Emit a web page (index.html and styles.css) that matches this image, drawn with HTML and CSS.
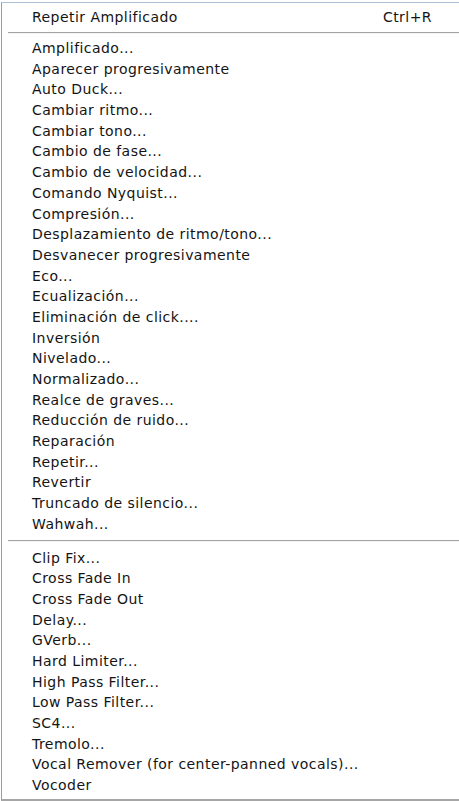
FILE: index.html
```html
<!DOCTYPE html>
<html lang="es">
<head>
<meta charset="utf-8">
<title>Menú Efectos</title>
<link rel="stylesheet" href="styles.css">
</head>
<body>
<div class="menu">
  <div class="item"><span class="label">Repetir Amplificado</span><span class="shortcut">Ctrl+R</span></div>
  <div class="sep"></div>
  <div class="item"><span class="label">Amplificado...</span></div>
  <div class="item"><span class="label">Aparecer progresivamente</span></div>
  <div class="item"><span class="label">Auto Duck...</span></div>
  <div class="item"><span class="label">Cambiar ritmo...</span></div>
  <div class="item"><span class="label">Cambiar tono...</span></div>
  <div class="item"><span class="label">Cambio de fase...</span></div>
  <div class="item"><span class="label">Cambio de velocidad...</span></div>
  <div class="item"><span class="label">Comando Nyquist...</span></div>
  <div class="item"><span class="label">Compresión...</span></div>
  <div class="item"><span class="label">Desplazamiento de ritmo/tono...</span></div>
  <div class="item"><span class="label">Desvanecer progresivamente</span></div>
  <div class="item"><span class="label">Eco...</span></div>
  <div class="item"><span class="label">Ecualización...</span></div>
  <div class="item"><span class="label">Eliminación de click....</span></div>
  <div class="item"><span class="label">Inversión</span></div>
  <div class="item"><span class="label">Nivelado...</span></div>
  <div class="item"><span class="label">Normalizado...</span></div>
  <div class="item"><span class="label">Realce de graves...</span></div>
  <div class="item"><span class="label">Reducción de ruido...</span></div>
  <div class="item"><span class="label">Reparación</span></div>
  <div class="item"><span class="label">Repetir...</span></div>
  <div class="item"><span class="label">Revertir</span></div>
  <div class="item"><span class="label">Truncado de silencio...</span></div>
  <div class="item"><span class="label">Wahwah...</span></div>
  <div class="sep sep-wide"></div>
  <div class="item"><span class="label">Clip Fix...</span></div>
  <div class="item"><span class="label">Cross Fade In</span></div>
  <div class="item"><span class="label">Cross Fade Out</span></div>
  <div class="item"><span class="label">Delay...</span></div>
  <div class="item"><span class="label">GVerb...</span></div>
  <div class="item"><span class="label">Hard Limiter...</span></div>
  <div class="item"><span class="label">High Pass Filter...</span></div>
  <div class="item"><span class="label">Low Pass Filter...</span></div>
  <div class="item"><span class="label">SC4...</span></div>
  <div class="item"><span class="label">Tremolo...</span></div>
  <div class="item"><span class="label">Vocal Remover (for center-panned vocals)...</span></div>
  <div class="item"><span class="label">Vocoder</span></div>
</div>
</body>
</html>
```
FILE: styles.css
```css
html, body {
  margin: 0;
  padding: 0;
  background: #ffffff;
}

.menu {
  box-sizing: border-box;
  width: 459px;
  height: 799px;
  margin-top: 2px;
  margin-left: 1px;
  padding-top: 4px;
  border-top: 1px solid #aec2d8;
  border-left: 1px solid #9c9c9c;
  border-bottom: 2px solid #a6a6a6;
  background: #ffffff;
  font-family: "DejaVu Sans", Verdana, sans-serif;
  font-size: 14px;
  letter-spacing: 0.45px;
  color: #141414;
}

.item {
  display: flex;
  align-items: center;
  height: 20.7px;
  padding-left: 30px;
  padding-right: 28px;
  white-space: nowrap;
}

.label {
  flex: 1;
}

.shortcut {
  flex: none;
}

.sep {
  height: 10px;
  margin-left: 6px;
  display: flex;
  align-items: center;
}

.sep::before {
  content: "";
  display: block;
  width: 100%;
  height: 1px;
  background: #a3a3a3;
  border-bottom: 1px solid #f4f4f4;
}

.sep-wide {
  height: 13px;
}
```
